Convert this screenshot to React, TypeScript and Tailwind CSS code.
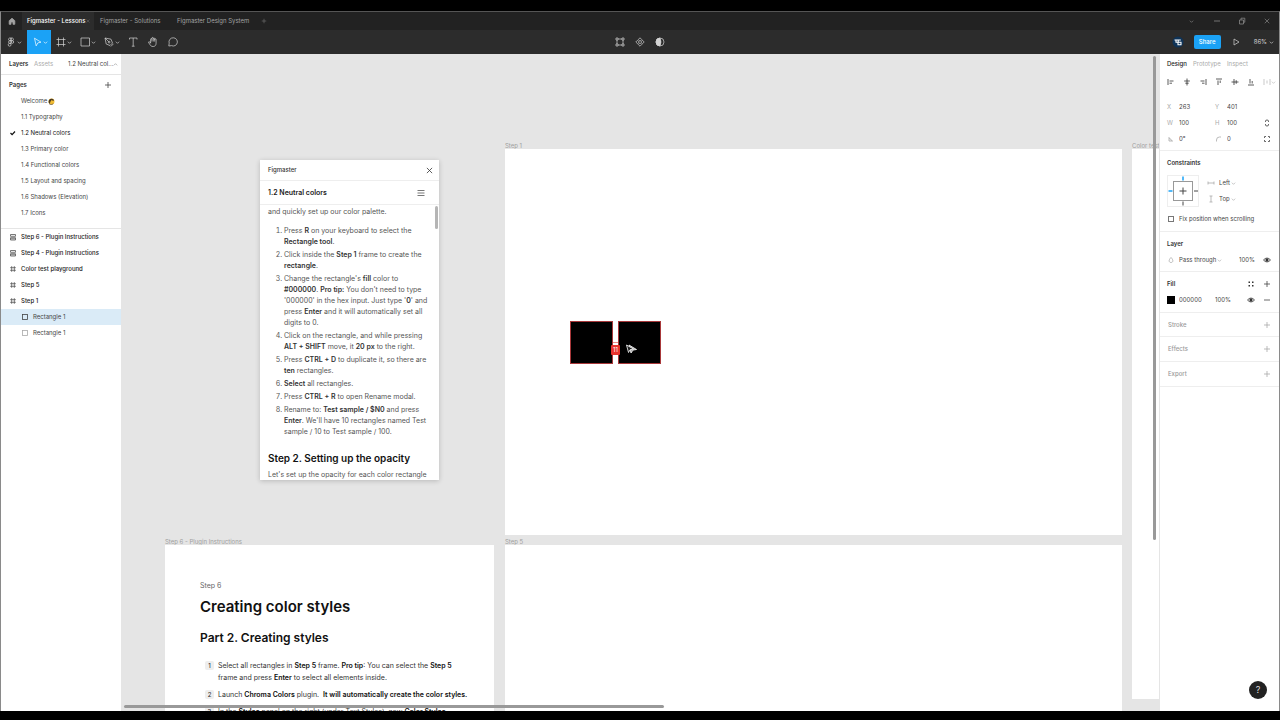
import type { ReactNode } from "react";

type IconProps = { className?: string };

const Chevron = ({ className = "" }: IconProps) => (
  <svg viewBox="0 0 6 6" className={`h-[5px] w-[5px] shrink-0 ${className}`} fill="none" stroke="currentColor" strokeWidth="0.8">
    <path d="M1 2l2 2 2-2" />
  </svg>
);

const Plus = ({ className = "h-2 w-2" }: IconProps) => (
  <svg viewBox="0 0 8 8" className={`shrink-0 ${className}`} fill="none" stroke="currentColor" strokeWidth="0.8">
    <path d="M4 1v6M1 4h6" />
  </svg>
);

const Cross = ({ className = "" }: IconProps) => (
  <svg viewBox="0 0 8 8" className={`shrink-0 ${className}`} fill="none" stroke="currentColor" strokeWidth="0.9">
    <path d="M1 1l6 6M7 1L1 7" />
  </svg>
);

const Eye = () => (
  <svg viewBox="0 0 10 8" className="h-2 w-[10px] shrink-0" fill="none" stroke="#333" strokeWidth="0.8">
    <path d="M1.5 4C3.3 1.5 6.7 1.5 8.5 4 6.7 6.5 3.3 6.5 1.5 4z" />
    <circle cx="5" cy="4" r="1.2" fill="#333" />
  </svg>
);

// 12x12 line icon used in the dark toolbar
const ToolIcon = ({ children }: { children: ReactNode }) => (
  <svg viewBox="0 0 12 12" className="h-3 w-3 shrink-0" fill="none" stroke="currentColor" strokeWidth="0.7" strokeLinejoin="round">
    {children}
  </svg>
);

const MiniIcon = ({ children, className = "" }: { children: ReactNode; className?: string }) => (
  <svg viewBox="0 0 8 8" className={`h-2 w-2 shrink-0 ${className}`} fill="none" stroke="currentColor" strokeWidth="0.8">
    {children}
  </svg>
);

const tools = [
  { name: "Frame", icon: <path d="M3.5 1.5v9M8.5 1.5v9M1.5 3.5h9M1.5 8.5h9" /> },
  { name: "Rectangle", icon: <rect x="2" y="2" width="8.5" height="8" /> },
  {
    name: "Pen",
    icon: (
      <>
        <path d="M2 2l6 1.2L9.5 7 7 9.5 3.2 8zM2 2l3.6 3.6M10.5 7.8L7.8 10.5" />
        <circle cx="6.1" cy="6.1" r="0.9" />
      </>
    ),
  },
];

const simpleTools = [
  { name: "Text", icon: <path d="M2.5 3.5V2h7.5v1.5M6.2 2v8.2M4.8 10.2h2.8" /> },
  {
    name: "Hand",
    icon: <path d="M3.6 7.2V3.3c0-1 1.3-1 1.3 0V2.2c0-1 1.4-1 1.4 0v.5c0-1 1.4-1 1.4 0v.8c0-1 1.4-.9 1.4 0v3.7c0 2-1.1 3.3-2.9 3.3-2 0-2.6-.8-3.4-2.1L1.6 6.5c-.3-.9.7-1.2 1.2-.5zM4.9 3.2v2.3M6.3 2.7v2.8M7.7 3v2.6" />,
  },
  { name: "Comment", icon: <path d="M6.3 1.8a4.1 4.1 0 1 1-1.8 7.8l-2.7.4.4-2.8a4.1 4.1 0 0 1 4.1-5.4z" /> },
];

const pages = [
  "1.1 Typography",
  "1.2 Neutral colors",
  "1.3 Primary color",
  "1.4 Functional colors",
  "1.5 Layout and spacing",
  "1.6 Shadows (Elevation)",
  "1.7 Icons",
];

const layers = [
  { name: "Step 6 - Plugin Instructions", kind: "stack" },
  { name: "Step 4 - Plugin Instructions", kind: "stack" },
  { name: "Color test playground", kind: "frame" },
  { name: "Step 5", kind: "frame" },
  { name: "Step 1", kind: "frame" },
];

const alignIcons = [
  { name: "Align left", d: "M1 1v6M2.5 3h4M2.5 5.2h2.5" },
  { name: "Align center", d: "M4 .5v7M1.2 3h5.6M2.3 5.2h3.4" },
  { name: "Align right", d: "M7 1v6M1.5 3h4M3 5.2h2.5" },
  { name: "Align top", d: "M1 1h6M3 2.5v4.5M5.2 2.5v2.5" },
  { name: "Align middle", d: "M.5 4h7M3 1v6M5.2 2.2v3.6" },
  { name: "Align bottom", d: "M1 7h6M3 1v4.5M5.2 3v2.5" },
];

function TitleBar() {
  return (
    <div className="flex h-[18px] items-stretch bg-[#222] whitespace-nowrap text-[#a3a3a3]">
      <button aria-label="Home" className="flex w-[21px] items-center justify-center">
        <MiniIcon>
          <path d="M1.2 3.7L4 1.2l2.8 2.5v3.6H5V5H3v2.3H1.2z" fill="currentColor" />
        </MiniIcon>
      </button>
      <button className="flex w-[72px] items-center justify-between bg-[#2c2c2c] pr-1 pl-[5px] font-medium text-white">
        Figmaster - Lessons
        <Cross className="h-1 w-1 text-[#777]" />
      </button>
      <button className="w-[76px] pl-[6px] text-left">Figmaster - Solutions</button>
      <button className="w-[86px] pl-[7px] text-left">Figmaster Design System</button>
      <button aria-label="New tab" className="flex w-4 items-center justify-center text-[#777]">
        <Plus className="h-[6px] w-[6px]" />
      </button>
      <div className="ml-auto flex text-[#888]">
        <button aria-label="More tabs" className="flex w-[25px] items-center justify-center">
          <Chevron />
        </button>
        <button aria-label="Minimize" className="flex w-[25px] items-center justify-center">
          <MiniIcon>
            <path d="M1 4h6" />
          </MiniIcon>
        </button>
        <button aria-label="Restore" className="flex w-[25px] items-center justify-center">
          <MiniIcon>
            <path d="M1.5 3h4v4h-4zM3 3V1.2h3.8v4H5.5" />
          </MiniIcon>
        </button>
        <button aria-label="Close" className="flex w-[25px] items-center justify-center">
          <Cross className="h-[6px] w-[6px]" />
        </button>
      </div>
    </div>
  );
}

function Toolbar() {
  return (
    <div className="flex h-6 items-stretch bg-[#2c2c2c] text-[#d4d4d4]">
      <div className="flex flex-1">
        <button aria-label="Menu" className="flex w-[26px] items-center pl-1">
          <ToolIcon>
            <path d="M6 2H4.6a1.4 1.4 0 0 0 0 2.7H6zM6 2h1.4a1.4 1.4 0 0 1 0 2.7H6zM6 4.700H4.600a1.400 1.400 0 0 0 0 2.700H6zM6 7.400H4.600A1.400 1.400 0 1 0 6 8.800z" />
            <circle cx="7.400" cy="6" r="1.300" />
          </ToolIcon>
          <Chevron />
        </button>
        <button aria-label="Move" className="flex w-6 items-center justify-center bg-[#1ba2f6] text-white">
          <ToolIcon>
            <path d="M3.5 2.2l6.5 4-3.2.7-1.6 3z" />
          </ToolIcon>
          <Chevron />
        </button>
        {tools.map((t) => (
          <button key={t.name} aria-label={t.name} className="flex w-6 items-center justify-center">
            <ToolIcon>{t.icon}</ToolIcon>
            <Chevron />
          </button>
        ))}
        {simpleTools.map((t) => (
          <button key={t.name} aria-label={t.name} className="flex w-5 items-center justify-center">
            <ToolIcon>{t.icon}</ToolIcon>
          </button>
        ))}
      </div>
      <div className="flex">
        <button aria-label="Edit object" className="flex w-5 items-center justify-center">
          <ToolIcon>
            <path d="M3 4v4M9 4v4M4 3h4M4 9h4" />
            <path d="M2 2h2v2H2zM8 2h2v2H8zM2 8h2v2H2zM8 8h2v2H8z" />
          </ToolIcon>
        </button>
        <button aria-label="Create component" className="flex w-5 items-center justify-center">
          <ToolIcon>
            <path d="M6 1.8l1.7 1.7L6 5.2 4.3 3.5zM6 6.8l1.7 1.7L6 10.2 4.3 8.5zM3.5 4.3L5.2 6 3.5 7.7 1.8 6zM8.5 4.3L10.2 6 8.5 7.7 6.8 6z" />
          </ToolIcon>
        </button>
        <button aria-label="Use as mask" className="flex w-5 items-center justify-center">
          <ToolIcon>
            <circle cx="6" cy="6" r="4" />
            <path d="M6 2a4 4 0 0 0 0 8 9 9 0 0 0 0-8z" fill="currentColor" />
          </ToolIcon>
        </button>
      </div>
      <div className="flex flex-1 items-center justify-end">
        <svg viewBox="0 0 12 12" className="mr-[10px] h-3 w-3">
          <circle cx="6" cy="6" r="5.5" fill="#0f3357" />
          <path d="M2.5 4h6.3M4 4v2.3h5.5M6 6.3v2.4h3V6M6.2 4v2" fill="none" stroke="#fff" strokeWidth="1.1" />
        </svg>
        <button className="mr-[9px] h-[14px] w-[27px] rounded-[2px] bg-[#1ba2f6] font-medium text-white">Share</button>
        <button aria-label="Present" className="mr-3">
          <ToolIcon>
            <path d="M4 3l5 3-5 3z" />
          </ToolIcon>
        </button>
        <button className="mr-[5px] flex items-center gap-[2px]">
          86%
          <Chevron />
        </button>
      </div>
    </div>
  );
}

function LayerIcon({ kind }: { kind: string }) {
  if (kind === "stack") {
    return (
      <MiniIcon className="text-[#555]">
        <path d="M1.5 1.5h5v1.8h-5zM1.5 4.700h5v2.300h-5zM1.500 5.800h5" />
      </MiniIcon>
    );
  }
  return (
    <MiniIcon className="text-[#555]">
      <path d="M2.7 1.2v5.6M5.3 1.2v5.6M1.2 2.7h5.6M1.2 5.3h5.6" />
    </MiniIcon>
  );
}

function LeftPanel() {
  return (
    <aside className="w-[121px] shrink-0 border-r border-[#e5e5e5] bg-white text-[#444]">
      <div className="flex h-[21px] items-center border-b border-[#e5e5e5] pl-2">
        <button className="w-[25px] text-left font-semibold text-[#333]">Layers</button>
        <button className="w-[34px] text-left text-[#aaa]">Assets</button>
        <button className="flex items-center">
          1.2 Neutral col...
          <Chevron className="rotate-180 text-[#999]" />
        </button>
      </div>
      <div className="flex h-[18px] items-center justify-between pt-px pr-[9px] pl-2">
        <h2 className="font-semibold text-[#333]">Pages</h2>
        <button aria-label="Add page">
          <Plus />
        </button>
      </div>
      <ul className="border-b border-[#e5e5e5] pb-[7px]">
        <li className="flex h-4 items-center gap-px pl-5">
          Welcome
          <svg viewBox="0 0 8 8" className="h-[7px] w-[7px]">
            <circle cx="4" cy="4" r="3.4" fill="#f2bd35" />
            <path d="M.8 5.500C0 1.500 3 .2 5.300 1c1.200.500 1.500 1.200 1.400 2C5.500 3.200 4.500 2.800 4 2.400 3.500 3.500 2.600 3.800 2.200 6.500z" fill="#4d3a20" />
            <path d="M1.500 6.800c1.500 1 3.500.700 4.500-.300" stroke="#4d3a20" fill="none" strokeWidth="0.800" />
          </svg>
        </li>
        {pages.map((p, i) => (
          <li key={p} className={`flex h-4 items-center pl-2 ${i === 1 ? "text-[#111]" : ""}`}>
            <span className="w-3">
              {i === 1 && (
                <MiniIcon>
                  <path d="M1.500 4l1.600 1.700L6 2.500" strokeWidth="1.200" />
                </MiniIcon>
              )}
            </span>
            {p}
          </li>
        ))}
      </ul>
      <ul>
        {layers.map((l) => (
          <li key={l.name} className="flex h-4 items-center gap-1 pl-2 font-medium text-[#222]">
            <LayerIcon kind={l.kind} />
            {l.name}
          </li>
        ))}
        <li className="flex h-4 items-center gap-1 bg-[#daebf7] pl-5">
          <MiniIcon>
            <rect x="1.500" y="1.500" width="5" height="5" />
          </MiniIcon>
          Rectangle 1
        </li>
        <li className="flex h-4 items-center gap-1 pl-5">
          <MiniIcon className="text-[#aaa]">
            <rect x="1.500" y="1.500" width="5" height="5" />
          </MiniIcon>
          Rectangle 1
        </li>
      </ul>
    </aside>
  );
}

function PluginWindow() {
  return (
    <section className="absolute top-[106px] left-[138px] flex h-[320px] w-[179px] flex-col overflow-hidden bg-white text-[#555] shadow-[0_1px_5px_rgba(0,0,0,0.2)]">
      <div className="flex h-[21px] shrink-0 items-center justify-between border-b border-[#eee] pr-[6px] pl-2 font-medium text-[#333]">
        Figmaster
        <button aria-label="Close plugin">
          <Cross className="h-[7px] w-[7px]" />
        </button>
      </div>
      <div className="flex h-6 shrink-0 items-center justify-between border-b border-[#eee] pr-[14px] pl-2">
        <h2 className="text-[7px] font-semibold text-[#222]">1.2 Neutral colors</h2>
        <button aria-label="Contents">
          <MiniIcon>
            <path d="M.5 1.500h7M.5 4h7M.5 6.500h7" />
          </MiniIcon>
        </button>
      </div>
      <div className="px-2 pt-px text-[7px] leading-[11px] [&_b]:font-semibold [&_b]:text-[#333]">
        <p>and quickly set up our color palette.</p>
        <ol className="mt-2 list-decimal space-y-[2px] pl-4 whitespace-nowrap">
          <li>
            Press <b>R</b> on your keyboard to select the<br />
            <b>Rectangle tool</b>.
          </li>
          <li>
            Click inside the <b>Step 1</b> frame to create the<br />
            <b>rectangle</b>.
          </li>
          <li>
            Change the rectangle's <b>fill</b> color to<br />
            <b>#000000</b>. <b>Pro tip:</b> You don't need to type<br />
            '000000' in the hex input. Just type '<b>0</b>' and<br />
            press <b>Enter</b> and it will automatically set all<br />
            digits to 0.
          </li>
          <li>
            Click on the rectangle, and while pressing<br />
            <b>ALT + SHIFT</b> move, it <b>20 px</b> to the right.
          </li>
          <li>
            Press <b>CTRL + D</b> to duplicate it, so there are<br />
            <b>ten</b> rectangles.
          </li>
          <li>
            <b>Select</b> all rectangles.
          </li>
          <li>
            Press <b>CTRL + R</b> to open Rename modal.
          </li>
          <li>
            Rename to: <b>Test sample / $N0</b> and press<br />
            <b>Enter</b>. We'll have 10 rectangles named Test<br />
            sample / 10 to Test sample / 100.
          </li>
        </ol>
        <h3 className="mt-[14px] mb-1 text-[10px] leading-[14px] font-semibold whitespace-nowrap text-[#111]">Step 2. Setting up the opacity</h3>
        <p className="whitespace-nowrap">Let's set up the opacity for each color rectangle</p>
      </div>
      <div className="absolute top-[46px] right-px h-[23px] w-[3px] rounded-full bg-[#b5b5b5]" />
    </section>
  );
}

function StepNumber({ n }: { n: number }) {
  return <span className="mt-px mr-1 flex h-[9px] w-[9px] shrink-0 items-center justify-center rounded-[2px] bg-[#eee] text-[6px] font-medium">{n}</span>;
}

function Canvas() {
  return (
    <main className="relative min-w-0 flex-1 overflow-hidden bg-[#e5e5e5] text-[#a0a0a0]">
      <span className="absolute top-[88px] left-[383px]">Step 1</span>
      <div className="absolute top-[95px] left-[383px] h-[386px] w-[617px] bg-white">
        <div className="absolute top-[172px] left-[65px] h-[43px] w-[43px] border border-[#a8383a] bg-black" />
        <div className="absolute top-[172px] left-[113px] h-[43px] w-[43px] border border-[#a8383a] bg-black" />
        <div className="absolute top-[193px] left-[108px] h-px w-[5px] bg-[#e88]" />
        <div className="absolute top-[196px] left-[106px] flex h-[10px] w-[9px] items-center justify-center rounded-[1px] bg-[#e8332e] text-white">11</div>
        <svg viewBox="0 0 12 12" className="absolute top-[194px] left-[120px] h-3 w-3" stroke="#fff" strokeWidth="0.800">
          <path d="M4 2l7.500 4.500-3.500.600L6 10z" fill="#aaa" />
          <path d="M1.500 2l7 4-3.500.800L3.500 9.500z" fill="#222" />
        </svg>
      </div>

      <span className="absolute top-[88px] left-[1010px] whitespace-nowrap">Color test playground</span>
      <div className="absolute top-[95px] right-0 left-[1010px] h-[550px] bg-white" />

      <span className="absolute top-[484px] left-[383px]">Step 5</span>
      <div className="absolute top-[491px] bottom-0 left-[383px] w-[617px] bg-white" />

      <span className="absolute top-[484px] left-[43px]">Step 6 - Plugin Instructions</span>
      <article className="absolute top-[491px] bottom-0 left-[43px] w-[329px] overflow-hidden bg-white pt-[35px] pl-[35px] whitespace-nowrap text-[#333]">
        <p className="text-[7px] leading-[12px] text-[#666]">Step 6</p>
        <h1 className="mt-[5px] text-[15px] leading-[20px] font-semibold text-[#111]">Creating color styles</h1>
        <h2 className="mt-[13px] text-[12px] leading-[16px] font-semibold text-[#111]">Part 2. Creating styles</h2>
        <ol className="mt-[14px] space-y-[5px] pl-[5px] text-[7px] leading-[12px] [&_b]:font-semibold [&_b]:text-[#111]">
          <li className="flex">
            <StepNumber n={1} />
            <span>
              Select all rectangles in <b>Step 5</b> frame. <b>Pro tip</b>: You can select the <b>Step 5</b>
              <br />
              frame and press <b>Enter</b> to select all elements inside.
            </span>
          </li>
          <li className="flex">
            <StepNumber n={2} />
            <span>
              Launch <b>Chroma Colors</b> plugin.&nbsp; <b>It will automatically create the color styles.</b>
            </span>
          </li>
          <li className="flex">
            <StepNumber n={3} />
            <span>
              In the <b>Styles</b> panel on the right (under Text Styles), now <b>Color Styles</b>
            </span>
          </li>
        </ol>
      </article>

      <PluginWindow />

      <div className="absolute top-[2px] right-[3px] h-[484px] w-[3px] rounded-full bg-[#999]" />
      <div className="absolute bottom-[3px] left-[2px] h-[3px] w-[540px] rounded-full bg-[#999]" />
    </main>
  );
}

function Field({ label, icon, value }: { label: string; icon?: ReactNode; value: string }) {
  return (
    <label className="flex h-4 w-12 items-center">
      <span className="w-3 text-[#aaa]">{icon ?? label}</span>
      <input aria-label={label} defaultValue={value} className="w-6 bg-transparent" />
    </label>
  );
}

function EmptySection({ title }: { title: string }) {
  return (
    <section className="flex h-[24px] items-center justify-between border-b border-[#eee] pr-2 pl-2 text-[#999] [&+&]:h-[25px]">
      <h3 className="font-medium">{title}</h3>
      <button aria-label={`Add ${title}`} className="text-[#aaa]">
        <Plus />
      </button>
    </section>
  );
}

function RightPanel() {
  return (
    <aside className="flex w-[120px] shrink-0 flex-col border-l border-[#e5e5e5] bg-white text-[#444]">
      <div className="flex h-5 items-center pl-[7px]">
        <button className="w-[26px] text-left font-medium text-[#222]">Design</button>
        <button className="w-[34px] text-left text-[#aaa]">Prototype</button>
        <button className="text-[#aaa]">Inspect</button>
      </div>
      <div className="flex h-4 items-center gap-2 pl-[7px] text-[#333]">
        {alignIcons.map((a) => (
          <button key={a.name} aria-label={a.name}>
            <MiniIcon>
              <path d={a.d} />
            </MiniIcon>
          </button>
        ))}
        <button aria-label="Distribute" className="flex items-center text-[#bbb]">
          <MiniIcon>
            <path d="M1 1v6M7 1v6M4 2.500v3" />
          </MiniIcon>
          <Chevron />
        </button>
      </div>

      <section className="mt-[9px] border-b border-[#eee] pb-[3px] pl-[7px]">
        <div className="flex">
          <Field label="X" value="263" />
          <Field label="Y" value="401" />
        </div>
        <div className="flex items-center">
          <Field label="W" value="100" />
          <Field label="H" value="100" />
          <button aria-label="Lock proportions">
            <MiniIcon>
              <path d="M2.500 3V2a1.500 1 0 0 1 3 0v1M2.500 5v1a1.500 1 0 0 0 3 0V5" />
            </MiniIcon>
          </button>
        </div>
        <div className="flex items-center">
          <Field
            label="Rotation"
            value="0°"
            icon={
              <MiniIcon>
                <path d="M2 2v4h4M2 3.500A2.500 2.500 0 0 1 4.500 6" />
              </MiniIcon>
            }
          />
          <Field
            label="Corner radius"
            value="0"
            icon={
              <MiniIcon>
                <path d="M1.500 6.500V5a3 3 0 0 1 3-3H6" />
              </MiniIcon>
            }
          />
          <button aria-label="Independent corners">
            <MiniIcon>
              <path d="M1.500 3V1.500H3M5 1.500h1.500V3M6.500 5v1.500H5M3 6.500H1.500V5" />
            </MiniIcon>
          </button>
        </div>
      </section>

      <section className="border-b border-[#eee] pt-1 pb-1 pl-[7px]">
        <h3 className="flex h-4 items-center font-semibold text-[#333]">Constraints</h3>
        <div className="mt-1 flex h-8 items-stretch">
          <svg viewBox="0 0 32 32" className="h-8 w-8 shrink-0" fill="none">
            <rect x="0.500" y="0.500" width="31" height="31" stroke="#eee" />
            <rect x="6.500" y="6.500" width="19" height="19" stroke="#999" />
            <path d="M16 12.500v7M12.500 16h7M16 26.500v4M27 16h4" stroke="#444" />
            <path d="M16 1.500v4M1.500 16h4" stroke="#1ba2f6" strokeWidth="1.500" />
          </svg>
          <div className="ml-2 flex flex-col">
            <label className="flex h-4 items-center">
              <MiniIcon className="mr-1 text-[#aaa]">
                <path d="M1 2.500v3M7 2.500v3M1 4h6" />
              </MiniIcon>
              <select aria-label="Horizontal constraint" className="w-3 appearance-none bg-transparent">
                <option>Left</option>
              </select>
              <Chevron className="text-[#aaa]" />
            </label>
            <label className="flex h-4 items-center">
              <MiniIcon className="mr-1 text-[#aaa]">
                <path d="M2.500 1h3M2.500 7h3M4 1v6" />
              </MiniIcon>
              <select aria-label="Vertical constraint" className="w-3 appearance-none bg-transparent">
                <option>Top</option>
              </select>
              <Chevron className="text-[#aaa]" />
            </label>
          </div>
        </div>
        <label className="mt-1 flex h-4 items-center gap-[5px]">
          <input type="checkbox" className="ml-px h-[6px] w-[6px] appearance-none border border-[#777] checked:bg-[#1ba2f6]" />
          Fix position when scrolling
        </label>
      </section>

      <section className="border-b border-[#eee] pt-1 pb-[3px] pl-[7px]">
        <h3 className="flex h-4 items-center font-semibold text-[#333]">Layer</h3>
        <div className="flex h-4 items-center">
          <MiniIcon className="mr-1 text-[#aaa]">
            <path d="M4 1.500c3 3 1.800 5 0 5s-3-2 0-5z" />
          </MiniIcon>
          <select aria-label="Blend mode" className="w-[38px] appearance-none bg-transparent">
            <option>Pass through</option>
          </select>
          <Chevron className="text-[#aaa]" />
          <input aria-label="Layer opacity" defaultValue="100%" className="mr-[3px] ml-auto w-5 bg-transparent" />
          <button aria-label="Toggle layer" className="mr-[7px]">
            <Eye />
          </button>
        </div>
      </section>

      <section className="border-b border-[#eee] pt-1 pb-1 pl-[7px]">
        <div className="flex h-4 items-center pr-2">
          <h3 className="mr-auto font-semibold text-[#333]">Fill</h3>
          <button aria-label="Color styles" className="mr-2">
            <svg viewBox="0 0 8 8" className="h-2 w-2" fill="#333">
              <path d="M1.500 1.500H3V3H1.500zM5 1.500h1.500V3H5zM1.500 5H3v1.500H1.500zM5 5h1.500v1.500H5z" />
            </svg>
          </button>
          <button aria-label="Add fill">
            <Plus />
          </button>
        </div>
        <div className="flex h-4 items-center pr-2">
          <button aria-label="Fill color" className="mr-1 h-2 w-2 bg-black" />
          <input aria-label="Hex value" defaultValue="000000" className="w-9 bg-transparent" />
          <input aria-label="Fill opacity" defaultValue="100%" className="w-5 bg-transparent" />
          <button aria-label="Toggle fill" className="mr-[7px] ml-auto">
            <Eye />
          </button>
          <button aria-label="Remove fill">
            <MiniIcon>
              <path d="M1 4h6" />
            </MiniIcon>
          </button>
        </div>
      </section>

      <EmptySection title="Stroke" />
      <EmptySection title="Effects" />
      <EmptySection title="Export" />

      <button aria-label="Help" className="mt-auto mr-3 mb-3 h-[18px] w-[18px] self-end rounded-full bg-[#222] text-[9px] text-[#ddd]">
        ?
      </button>
    </aside>
  );
}

export default function App() {
  return (
    <div className="flex h-screen flex-col bg-black pt-[11px] pb-[9px] font-['Inter',sans-serif] text-[6px] leading-[8px]">
      <div className="flex min-h-0 flex-1 flex-col border-x border-t border-x-[#8a8a8a] border-t-[#555]">
        <TitleBar />
        <Toolbar />
        <div className="flex min-h-0 flex-1">
          <LeftPanel />
          <Canvas />
          <RightPanel />
        </div>
      </div>
    </div>
  );
}
